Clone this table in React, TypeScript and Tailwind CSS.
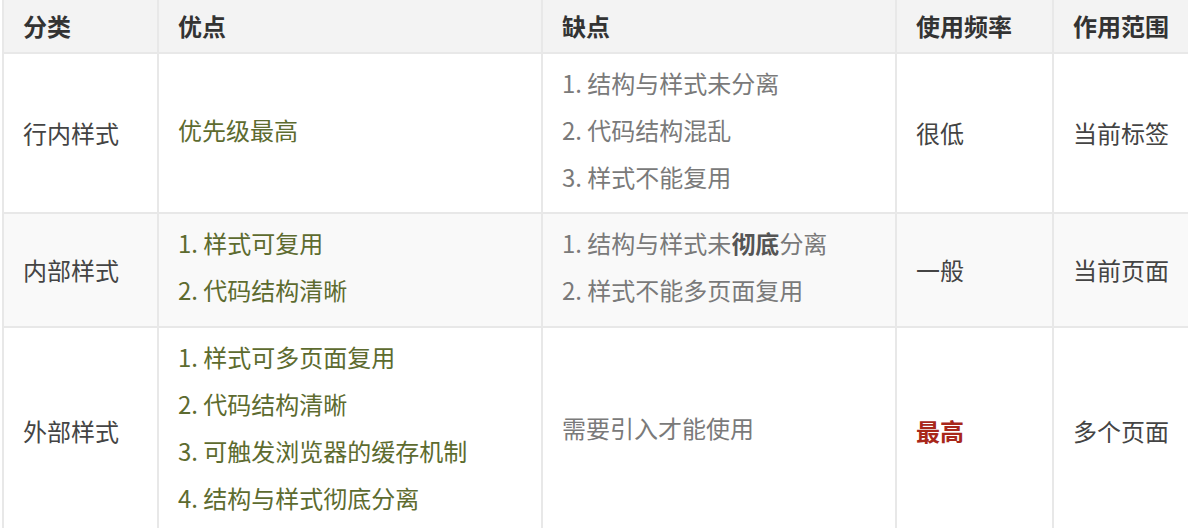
import type { ReactNode } from 'react'

interface Row {
  kind: string
  pros: ReactNode[]
  cons: ReactNode[]
  freq: ReactNode
  scope: string
  pad: string
  striped?: boolean
}

const ROWS: Row[] = [
  {
    kind: '行内样式',
    pros: ['优先级最高'],
    cons: ['1. 结构与样式未分离', '2. 代码结构混乱', '3. 样式不能复用'],
    freq: '很低',
    scope: '当前标签',
    pad: 'pt-[5px] pb-[12px]',
  },
  {
    kind: '内部样式',
    pros: ['1. 样式可复用', '2. 代码结构清晰'],
    cons: [
      <>
        1. 结构与样式未<b className="font-bold text-[#555]">彻底</b>分离
      </>,
      '2. 样式不能多页面复用',
    ],
    freq: '一般',
    scope: '当前页面',
    pad: 'pt-[5px] pb-[13px]',
    striped: true,
  },
  {
    kind: '外部样式',
    pros: ['1. 样式可多页面复用', '2. 代码结构清晰', '3. 可触发浏览器的缓存机制', '4. 结构与样式彻底分离'],
    cons: ['需要引入才能使用'],
    freq: <b className="font-bold text-[#a8271a]">最高</b>,
    scope: '多个页面',
    pad: 'pt-[5px] pb-[13px]',
  },
]

function Lines({ items, className }: { items: ReactNode[]; className: string }) {
  return (
    <div className={className}>
      {items.map((it, i) => (
        <div key={i} className="leading-[47px] whitespace-nowrap">
          {it}
        </div>
      ))}
    </div>
  )
}

export default function App() {
  const cell = 'border-r-2 border-b-2 border-[#e8e8e8] px-[19px] align-middle'
  return (
    <div
      className="w-[1188px] h-[528px] overflow-hidden bg-white pl-[2px]"
      style={{ fontFamily: '"Noto Sans CJK SC", "Noto Sans", sans-serif' }}
    >
      <table className="table-fixed border-collapse w-[1240px] text-[24px] border-l-2 border-[#e8e8e8]">
        <colgroup>
          <col className="w-[155px]" />
          <col className="w-[384px]" />
          <col className="w-[354px]" />
          <col className="w-[157px]" />
          <col className="w-[190px]" />
        </colgroup>
        <thead>
          <tr className="bg-[#f3f3f3] h-[53px] text-left text-[#333]">
            {['分类', '优点', '缺点', '使用频率', '作用范围'].map((h) => (
              <th key={h} className={`${cell} font-bold`}>
                {h}
              </th>
            ))}
          </tr>
        </thead>
        <tbody>
          {ROWS.map((r) => (
            <tr key={r.kind} className={r.striped ? 'bg-[#f9f9f9]' : 'bg-white'}>
              <td className={`${cell} text-[#444]`}>{r.kind}</td>
              <td className={`${cell} ${r.pad}`}>
                <Lines items={r.pros} className="text-[#5d6b2f]" />
              </td>
              <td className={`${cell} ${r.pad}`}>
                <Lines items={r.cons} className="text-[#7a7a7a]" />
              </td>
              <td className={`${cell} text-[#444]`}>{r.freq}</td>
              <td className={`${cell} text-[#444]`}>{r.scope}</td>
            </tr>
          ))}
        </tbody>
      </table>
    </div>
  )
}
